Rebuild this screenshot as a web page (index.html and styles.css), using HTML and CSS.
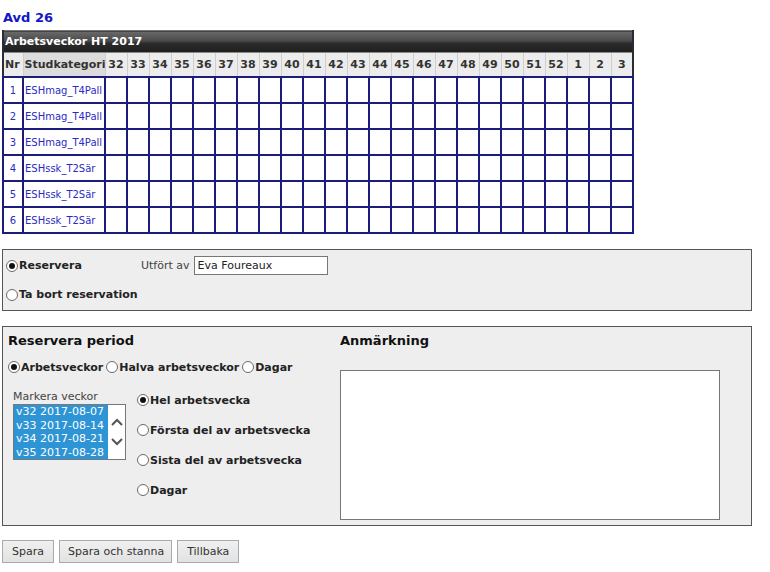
FILE: index.html
```html
<!DOCTYPE html>
<html>
<head>
<meta charset="utf-8">
<link rel="stylesheet" href="styles.css">
</head>
<body>
<h1 class="page-title">Avd 26</h1>

<table class="weeks">
  <colgroup>
    <col class="w-nr"><col class="w-cat">
    <col class="w-wk"><col class="w-wk"><col class="w-wk"><col class="w-wk"><col class="w-wk"><col class="w-wk"><col class="w-wk"><col class="w-wk"><col class="w-wk"><col class="w-wk"><col class="w-wk"><col class="w-wk"><col class="w-wk"><col class="w-wk"><col class="w-wk"><col class="w-wk"><col class="w-wk"><col class="w-wk"><col class="w-wk"><col class="w-wk"><col class="w-wk"><col class="w-wk"><col class="w-wk"><col class="w-wk">
  </colgroup>
  <tr class="title-row"><td colspan="26">Arbetsveckor HT 2017</td></tr>
  <tr class="head-row">
    <th class="c-nr">Nr</th><th class="c-cat">Studkategori</th>
    <th>32</th><th>33</th><th>34</th><th>35</th><th>36</th><th>37</th><th>38</th><th>39</th><th>40</th><th>41</th><th>42</th><th>43</th><th>44</th><th>45</th><th>46</th><th>47</th><th>48</th><th>49</th><th>50</th><th>51</th><th>52</th><th>1</th><th>2</th><th>3</th>
  </tr>
  <tr class="data-row"><td class="c-nr">1</td><td class="c-cat">ESHmag_T4Pall</td><td></td><td></td><td></td><td></td><td></td><td></td><td></td><td></td><td></td><td></td><td></td><td></td><td></td><td></td><td></td><td></td><td></td><td></td><td></td><td></td><td></td><td></td><td></td><td></td></tr>
  <tr class="data-row"><td class="c-nr">2</td><td class="c-cat">ESHmag_T4Pall</td><td></td><td></td><td></td><td></td><td></td><td></td><td></td><td></td><td></td><td></td><td></td><td></td><td></td><td></td><td></td><td></td><td></td><td></td><td></td><td></td><td></td><td></td><td></td><td></td></tr>
  <tr class="data-row"><td class="c-nr">3</td><td class="c-cat">ESHmag_T4Pall</td><td></td><td></td><td></td><td></td><td></td><td></td><td></td><td></td><td></td><td></td><td></td><td></td><td></td><td></td><td></td><td></td><td></td><td></td><td></td><td></td><td></td><td></td><td></td><td></td></tr>
  <tr class="data-row"><td class="c-nr">4</td><td class="c-cat">ESHssk_T2Sär</td><td></td><td></td><td></td><td></td><td></td><td></td><td></td><td></td><td></td><td></td><td></td><td></td><td></td><td></td><td></td><td></td><td></td><td></td><td></td><td></td><td></td><td></td><td></td><td></td></tr>
  <tr class="data-row"><td class="c-nr">5</td><td class="c-cat">ESHssk_T2Sär</td><td></td><td></td><td></td><td></td><td></td><td></td><td></td><td></td><td></td><td></td><td></td><td></td><td></td><td></td><td></td><td></td><td></td><td></td><td></td><td></td><td></td><td></td><td></td><td></td></tr>
  <tr class="data-row"><td class="c-nr">6</td><td class="c-cat">ESHssk_T2Sär</td><td></td><td></td><td></td><td></td><td></td><td></td><td></td><td></td><td></td><td></td><td></td><td></td><td></td><td></td><td></td><td></td><td></td><td></td><td></td><td></td><td></td><td></td><td></td><td></td></tr>
</table>

<div class="panel panel-action">
  <div class="action-row">
    <label class="opt opt-first"><span class="radio checked"></span>Reservera</label>
    <span class="field-label">Utfört av</span>
    <span class="text-input">Eva Foureaux</span>
  </div>
  <div class="action-row">
    <label class="opt"><span class="radio"></span>Ta bort reservation</label>
  </div>
</div>

<div class="panel panel-period">
  <div class="col-left">
    <h2 class="section-title">Reservera period</h2>
    <div class="mode-row">
      <label class="opt"><span class="radio checked"></span>Arbetsveckor</label>
      <label class="opt"><span class="radio"></span>Halva arbetsveckor</label>
      <label class="opt"><span class="radio"></span>Dagar</label>
    </div>
    <div class="pick">
      <div class="week-pick">
        <div class="small-label">Markera veckor</div>
        <div class="listbox">
          <div class="options">
            <div class="option">v32 2017-08-07</div>
            <div class="option">v33 2017-08-14</div>
            <div class="option">v34 2017-08-21</div>
            <div class="option">v35 2017-08-28</div>
          </div>
          <div class="scroll">
            <svg width="14" height="12" viewBox="0 0 14 12"><path d="M2 9 L7 4 L12 9" fill="none" stroke="#555" stroke-width="2"/></svg>
            <svg width="14" height="12" viewBox="0 0 14 12"><path d="M2 3 L7 8 L12 3" fill="none" stroke="#555" stroke-width="2"/></svg>
          </div>
        </div>
      </div>
      <div class="part-list">
        <label class="opt"><span class="radio checked"></span>Hel arbetsvecka</label>
        <label class="opt"><span class="radio"></span>Första del av arbetsvecka</label>
        <label class="opt"><span class="radio"></span>Sista del av arbetsvecka</label>
        <label class="opt"><span class="radio"></span>Dagar</label>
      </div>
    </div>
  </div>
  <div class="col-right">
    <h2 class="section-title">Anmärkning</h2>
    <div class="textarea"></div>
  </div>
</div>

<div class="buttons">
  <span class="btn">Spara</span>
  <span class="btn btn-tight">Spara och stanna</span>
  <span class="btn">Tillbaka</span>
</div>
</body>
</html>
```

FILE: styles.css
```css
body {
  margin: 0;
  padding: 0 0 0 2px;
  font-family: "DejaVu Sans", Verdana, sans-serif;
  font-size: 11px;
  color: #222;
  background: #fff;
}

.page-title {
  margin: 0;
  padding: 10px 0 0 1px;
  height: 20px;
  font-size: 13px;
  font-weight: bold;
  color: #1515c8;
  line-height: 15px;
}

.weeks {
  border-collapse: collapse;
  border: 2px solid #2b2b3a;
  border-top: 1px solid #777;
  table-layout: fixed;
  width: 632px;
}
.w-nr { width: 20px; }
.w-cat { width: 82px; }
.w-wk { width: 22px; }

.weeks td, .weeks th {
  padding: 0;
}

.title-row td {
  height: 21px;
  background: linear-gradient(#6a6a6a 0%, #4a4a4a 45%, #2c2c2c 55%, #1e1e1e 100%);
  color: #fff;
  font-weight: bold;
  font-size: 11px;
  padding-left: 1px;
  text-align: left;
  white-space: nowrap;
  border-bottom: 1px solid #888;
}

.head-row th {
  height: 23px;
  background: #ececec;
  color: #333;
  font-size: 11px;
  font-weight: bold;
  text-align: center;
  border-right: 1px solid #cfcfcf;
  border-bottom: 1px solid #9a9a9a;
  white-space: nowrap;
  overflow: hidden;
}
.head-row th.c-nr { text-align: left; padding-left: 1px; }
.head-row th.c-cat { background: #dcdcdc; text-align: left; padding-left: 1px; }

.data-row td {
  height: 24px;
  border: 2px solid #1c1c7e;
  font-size: 10px;
  color: #2b2bc4;
}
.data-row td.c-nr { text-align: center; }
.data-row td.c-cat { padding-left: 1px; white-space: nowrap; overflow: hidden; }

.panel {
  background: #eeeeee;
  border: 1px solid #555;
  width: 748px;
}

.panel-action {
  margin-top: 15px;
  height: 60px;
}

.action-row {
  display: flex;
  align-items: center;
  height: 15px;
  margin-top: 8px;
}
.action-row + .action-row { margin-top: 14px; }

.opt {
  display: inline-flex;
  align-items: center;
  font-weight: bold;
  font-size: 11px;
  color: #222;
  white-space: nowrap;
}
.opt-first { width: 138px; }

.radio {
  display: inline-block;
  position: relative;
  width: 12px;
  height: 12px;
  border: 1px solid #6b6b6b;
  border-radius: 50%;
  background: #fff;
  margin: 0 1px 0 3px;
  box-sizing: border-box;
}
.radio.checked::after {
  content: "";
  position: absolute;
  left: 2px;
  top: 2px;
  width: 6px;
  height: 6px;
  border-radius: 50%;
  background: #111;
}

.field-label {
  font-size: 11px;
  color: #444;
  margin-right: 4px;
}

.text-input {
  display: inline-block;
  width: 129px;
  height: 17px;
  line-height: 17px;
  background: #fff;
  border: 1px solid #777;
  font-size: 11px;
  padding-left: 3px;
  color: #222;
}

.panel-period {
  margin-top: 15px;
  height: 198px;
  display: flex;
}

.col-left {
  width: 332px;
  padding-left: 5px;
}
.col-right {
  flex: 1;
}

.section-title {
  margin: 0;
  padding-top: 6px;
  height: 20px;
  font-size: 13px;
  line-height: 16px;
  font-weight: bold;
  color: #111;
}

.mode-row {
  display: flex;
  margin-left: -3px;
  height: 16px;
  align-items: center;
  margin-top: 6px;
}
.mode-row .radio { margin-left: 3px; }

.pick {
  display: flex;
  margin-top: 10px;
}

.week-pick {
  width: 124px;
  padding-left: 5px;
  padding-top: 5px;
}

.small-label {
  font-size: 11px;
  color: #444;
  height: 13px;
  line-height: 13px;
}

.listbox {
  display: flex;
  width: 111px;
  height: 54px;
  border: 1px solid #777;
  background: #fff;
  margin-top: 1px;
}

.options {
  width: 94px;
  background: #2d94d6;
}
.option {
  color: #fff;
  font-size: 11px;
  line-height: 13.5px;
  height: 13.5px;
  padding-left: 2px;
  white-space: nowrap;
}

.scroll {
  flex: 1;
  display: flex;
  flex-direction: column;
  justify-content: center;
  align-items: center;
  gap: 8px;
  background: #fff;
}
.scroll svg { display: block; }

.part-list {
  display: flex;
  flex-direction: column;
}
.part-list .opt {
  height: 30px;
  align-items: center;
}
.part-list .opt .radio { margin-left: 0; margin-right: 1px; }

.textarea {
  margin-top: 17px;
  width: 378px;
  height: 148px;
  background: #fff;
  border: 1px solid #777;
}

.buttons {
  display: flex;
  gap: 5px;
  margin-top: 14px;
}

.btn {
  display: inline-block;
  height: 21px;
  line-height: 21px;
  padding: 0 9px;
  border: 1px solid #aaa;
  background: linear-gradient(#f0f0f0, #e2e2e2);
  font-size: 11px;
  color: #333;
}
.btn-tight { padding: 0 7px 0 8px; }
```
